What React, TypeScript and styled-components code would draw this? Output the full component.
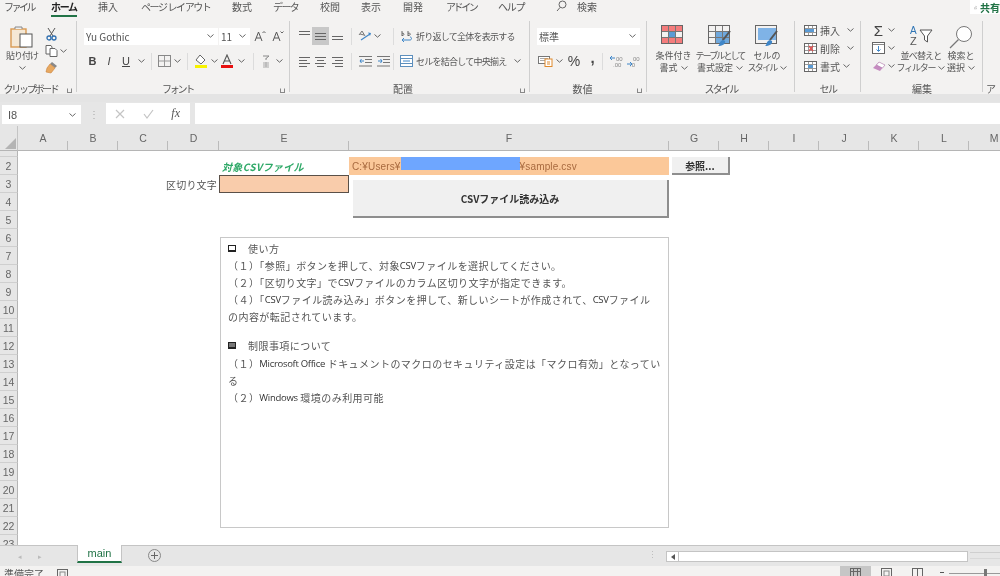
import React from 'react';
import styled, { createGlobalStyle } from 'styled-components';

const JP = '"Noto Sans CJK JP", "Liberation Sans", sans-serif';

const GlobalStyle = createGlobalStyle`
  html, body {
    margin: 0;
    padding: 0;
    background: #fff;
    font-family: ${JP};
    color: #444;
  }
`;

const Page = styled.div`
  width: 1000px;
  height: 576px;
  display: flex;
  flex-direction: column;
  overflow: hidden;
  background: #f3f2f1;
  filter: blur(0.4px);
`;

/* menu tabs */
const MenuBar = styled.div`
  height: 17px;
  display: flex;
  align-items: flex-start;
  position: relative;
  padding-left: 4px;
  font-size: 10px;
  line-height: 13px;
`;

const MenuItem = styled.div<{ $w: number; $ls?: number; $active?: boolean; $ml?: number }>`
  width: ${(p) => p.$w}px;
  flex: none;
  margin-left: ${(p) => p.$ml ?? 0}px;
  white-space: nowrap;
  font-weight: ${(p) => (p.$active ? 700 : 400)};
  color: ${(p) => (p.$active ? '#222' : '#555')};
  letter-spacing: ${(p) => p.$ls ?? 0}px;
  span {
    display: inline-block;
    height: 15px;
    border-bottom: ${(p) => (p.$active ? '2px solid #217346' : 'none')};
  }
`;

const ShareTab = styled.div`
  position: absolute;
  right: 0;
  top: 0;
  width: 30px;
  height: 14px;
  display: flex;
  align-items: center;
  gap: 3px;
  padding-left: 4px;
  box-sizing: border-box;
  overflow: hidden;
  background: #fff;
  color: #217346;
  font-weight: 700;
  white-space: nowrap;
`;

/* ribbon */
const Ribbon = styled.div`
  height: 77px;
  flex: none;
  display: flex;
  font-size: 10px;
  color: #555;
`;

const Group = styled.div<{ $w: number; $pad?: number; $noLine?: boolean }>`
  width: ${(p) => p.$w}px;
  flex: none;
  box-sizing: border-box;
  display: flex;
  flex-direction: column;
  position: relative;
  padding-left: ${(p) => p.$pad ?? 0}px;
  &::after {
    content: '';
    display: ${(p) => (p.$noLine ? 'none' : 'block')};
    position: absolute;
    right: 0;
    top: 4px;
    bottom: 2px;
    width: 1px;
    background: #cfcfcf;
  }
`;

const GroupBody = styled.div`
  height: 64px;
  flex: none;
  padding-top: 8px;
  box-sizing: border-box;
  display: flex;
  flex-direction: column;
`;

const HBody = styled(GroupBody)`
  flex-direction: row;
`;

const GroupLabel = styled.div<{ $pad?: number; $shift?: number; $start?: boolean; $ls?: number }>`
  flex: 1;
  display: flex;
  align-items: center;
  justify-content: ${(p) => (p.$start ? 'flex-start' : 'center')};
  font-size: 10px;
  letter-spacing: ${(p) => p.$ls ?? 0}px;
  color: #555;
  position: relative;
  margin-left: -${(p) => p.$pad ?? 0}px;
  padding-right: ${(p) => p.$shift ?? 0}px;
  padding-left: ${(p) => (p.$start ? 3 : 0)}px;
  white-space: nowrap;
`;

const Launcher = styled.span`
  position: absolute;
  right: 5px;
  bottom: 3px;
  width: 5px;
  height: 5px;
  border: 1px solid #888;
  border-top-color: transparent;
  border-right-color: #888;
  box-sizing: border-box;
`;

const ToolRow = styled.div<{ $top?: number }>`
  height: 18px;
  display: flex;
  align-items: center;
  margin-top: ${(p) => p.$top ?? 0}px;
  white-space: nowrap;
`;

const Tool = styled.div<{ $w: number; $on?: boolean; $bold?: boolean; $italic?: boolean; $under?: boolean; $size?: number; $lift?: number }>`
  width: ${(p) => p.$w}px;
  height: 18px;
  flex: none;
  box-sizing: border-box;
  padding-bottom: ${(p) => p.$lift ?? 0}px;
  display: flex;
  align-items: center;
  justify-content: center;
  background: ${(p) => (p.$on ? '#c8c8c8' : 'transparent')};
  font-family: "Liberation Sans", sans-serif;
  font-weight: ${(p) => (p.$bold ? 700 : 400)};
  font-style: ${(p) => (p.$italic ? 'italic' : 'normal')};
  text-decoration: ${(p) => (p.$under ? 'underline' : 'none')};
  font-size: ${(p) => p.$size ?? 11}px;
  color: #444;
`;

const Divider = styled.div<{ $l?: number; $r?: number }>`
  width: 1px;
  height: 17px;
  flex: none;
  background: #dcdcdc;
  margin: 0 ${(p) => p.$r ?? 4}px 0 ${(p) => p.$l ?? 4}px;
`;

const Spacer = styled.span<{ $w: number }>`
  width: ${(p) => p.$w}px;
  flex: none;
`;

const SelectBox = styled.div<{ $w: number }>`
  width: ${(p) => p.$w}px;
  height: 17px;
  flex: none;
  box-sizing: border-box;
  background: #fff;
  display: flex;
  align-items: center;
  justify-content: space-between;
  padding: 0 4px 0 2px;
  font-size: 10px;
  color: #555;
  margin-right: 1px;
`;

const ToolText = styled.span`
  font-size: 9px;
  color: #555;
  font-family: ${JP};
  margin-left: 3px;
  letter-spacing: -0.75px;
`;

const PasteButton = styled.div`
  width: 44px;
  flex: none;
  display: flex;
  flex-direction: column;
  align-items: center;
  line-height: 12px;
  font-size: 9px;
  letter-spacing: -1px;
  white-space: nowrap;
  svg:last-child {
    margin-top: 4px;
  }
`;

const SmallColumn = styled.div<{ $ml?: number; $w?: number }>`
  display: flex;
  flex-direction: column;
  flex: none;
  margin-left: ${(p) => p.$ml ?? -1}px;
  width: ${(p) => (p.$w ? `${p.$w}px` : 'auto')};
`;

const EditColumn = styled(SmallColumn)`
  margin-top: -4px;
`;

const BigButton = styled.div<{ $w: number }>`
  width: ${(p) => p.$w}px;
  flex: none;
  display: flex;
  flex-direction: column;
  align-items: center;
  font-size: 9px;
  line-height: 12px;
  color: #555;
  white-space: nowrap;
`;

const BigIcon = styled.div`
  height: 25px;
  display: flex;
  align-items: flex-start;
  justify-content: center;
`;

const BigLine = styled.span<{ $ls?: number }>`
  display: inline-flex;
  align-items: center;
  gap: 3px;
  letter-spacing: ${(p) => p.$ls ?? 0}px;
`;

const CellStack = styled(GroupBody)`
  padding-top: 4px;
`;

const CellRow = styled.div`
  height: 18px;
  display: flex;
  align-items: center;
  gap: 3px;
  padding-left: 9px;
  font-size: 10px;
  color: #555;
`;

/* formula bar */
const Band = styled.div`
  height: 8px;
  flex: none;
  background: #e4e4e4;
`;

const FormulaBar = styled.div`
  height: 24px;
  flex: none;
  display: flex;
  align-items: flex-start;
  background: #e6e6e6;
  padding-top: 1px;
  box-sizing: border-box;
`;

const NameBox = styled.div`
  width: 79px;
  height: 19px;
  margin: 2px 0 0 2px;
  flex: none;
  background: #fff;
  display: flex;
  align-items: center;
  justify-content: space-between;
  padding: 0 5px 0 6px;
  box-sizing: border-box;
  font-family: "Liberation Sans", sans-serif;
  font-size: 11px;
  color: #555;
`;

const Grip = styled.div`
  width: 25px;
  height: 20px;
  flex: none;
  display: flex;
  align-items: center;
  justify-content: center;
  color: #aaa;
  font-size: 10px;
`;

const FormulaButtons = styled.div`
  width: 84px;
  height: 21px;
  flex: none;
  background: #fff;
  display: flex;
  align-items: center;
  justify-content: space-between;
  padding: 0 10px 0 9px;
  box-sizing: border-box;
  color: #bbb;
`;

const FxLabel = styled.span`
  font-family: "Liberation Serif", serif;
  font-style: italic;
  font-size: 12px;
  color: #555;
`;

const FormulaInput = styled.div`
  flex: 1;
  height: 21px;
  margin-left: 5px;
  background: #fff;
`;

/* worksheet */
const Sheet = styled.div`
  height: 419px;
  flex: none;
  position: relative;
  overflow: hidden;
  background: #fff;
  display: grid;
  grid-template-columns: 18px 50px 50px 50px 51px 130px 320px 50px 50px 50px 50px 50px 50px 50px;
  grid-template-rows: 25px 6px repeat(23, 18px);
`;

const Corner = styled.div`
  background: #e6e6e6;
  border-bottom: 1px solid #b5b5b5;
  border-right: 1px solid #c4c4c4;
  position: relative;
  &::after {
    content: '';
    position: absolute;
    right: 1px;
    bottom: 1px;
    border-style: solid;
    border-width: 0 0 11px 11px;
    border-color: transparent transparent #b4b4b4 transparent;
  }
`;

const ColHead = styled.div<{ $col: number }>`
  grid-column: ${(p) => p.$col};
  grid-row: 1;
  background: #e6e6e6;
  border-bottom: 1px solid #b5b5b5;
  position: relative;
  display: flex;
  align-items: center;
  justify-content: center;
  font-family: "Liberation Sans", sans-serif;
  font-size: 10.5px;
  color: #666;
  &::after {
    content: '';
    position: absolute;
    right: 0;
    bottom: 0;
    width: 1px;
    height: 9px;
    background: #bbb;
  }
`;

const RowHead = styled.div<{ $row: number }>`
  grid-column: 1;
  grid-row: ${(p) => p.$row};
  background: #e6e6e6;
  border-right: 1px solid #b5b5b5;
  border-bottom: 1px solid #cfcfcf;
  box-sizing: border-box;
  display: flex;
  align-items: center;
  justify-content: center;
  overflow: hidden;
  font-family: "Liberation Sans", sans-serif;
  font-size: 10.5px;
  color: #666;
`;

const Cell = styled.div<{ $col: number; $row: number }>`
  grid-column: ${(p) => p.$col};
  grid-row: ${(p) => p.$row};
  display: flex;
  align-items: center;
  white-space: nowrap;
  font-size: 10px;
  min-width: 0;
`;

const GreenLabel = styled(Cell)`
  padding-left: 3px;
  color: #2fa968;
  font-weight: 700;
  font-style: italic;
  letter-spacing: 0.35px;
`;

const PathCell = styled(Cell)`
  background: #fbc899;
  color: #a86a3f;
  padding-left: 3px;
  font-family: "Liberation Sans", sans-serif;
  font-size: 10px;
  letter-spacing: 0.15px;
`;

const Redaction = styled.span`
  display: inline-block;
  width: 119px;
  height: 13px;
  margin: -5px 0 0 0;
  background: #6ea6ff;
  flex: none;
`;

const SepLabel = styled(Cell)`
  justify-content: flex-end;
  padding-right: 2px;
  color: #555;
  letter-spacing: 0.2px;
`;

const InputCell = styled(Cell)`
  background: #f9ccab;
  border: 1px solid #5a5048;
  box-sizing: border-box;
`;

const MacroButton = styled.div<{ $left: number; $top: number; $w: number; $h: number; $size: number }>`
  position: absolute;
  left: ${(p) => p.$left}px;
  top: ${(p) => p.$top}px;
  width: ${(p) => p.$w}px;
  height: ${(p) => p.$h}px;
  box-sizing: border-box;
  background: #f0f0f0;
  border-right: 2px solid #8e8e8e;
  border-bottom: 2px solid #8e8e8e;
  display: flex;
  align-items: center;
  justify-content: center;
  font-size: ${(p) => p.$size}px;
  font-weight: 700;
  color: #333;
`;

const NoteBox = styled.div`
  position: absolute;
  left: 220px;
  top: 111px;
  width: 449px;
  height: 291px;
  box-sizing: border-box;
  background: #fff;
  border: 1px solid #c8c8c8;
  padding: 2px 0 0 7px;
  font-size: 10px;
  color: #555;
`;

const NoteLine = styled.div<{ $gap?: number }>`
  height: 17px;
  line-height: 17px;
  margin-top: ${(p) => p.$gap ?? 0}px;
  white-space: nowrap;
  display: flex;
  align-items: center;
  letter-spacing: 0.45px;
`;

const Latin = styled.span`
  font-family: "Open Sans", "Liberation Sans", sans-serif;
  letter-spacing: -0.3px;
  font-size: 9.5px;
  color: #333;
`;

const Bullet = styled.span<{ $dark?: boolean }>`
  width: 8px;
  height: 7px;
  flex: none;
  margin-right: 12px;
  box-sizing: border-box;
  border: 1.5px solid #222;
  border-bottom-width: 2px;
  background: ${(p) => (p.$dark ? '#777' : '#fff')};
`;

/* sheet tabs */
const SheetTabs = styled.div`
  height: 21px;
  flex: none;
  display: flex;
  align-items: flex-start;
  box-sizing: border-box;
  background: #e6e6e6;
  border-top: 1px solid #c4c4c4;
  color: #bbb;
  font-size: 7px;
`;

const TabArrows = styled.div`
  width: 77px;
  flex: none;
  height: 19px;
  display: flex;
  align-items: center;
  gap: 16px;
  padding-left: 18px;
  box-sizing: border-box;
`;

const ActiveTab = styled.div`
  width: 45px;
  height: 18px;
  flex: none;
  margin-top: -1px;
  background: #fff;
  border-left: 1px solid #c4c4c4;
  border-right: 1px solid #c4c4c4;
  border-bottom: 2px solid #217346;
  box-sizing: border-box;
  display: flex;
  align-items: center;
  justify-content: center;
  font-family: "Liberation Sans", sans-serif;
  font-size: 11px;
  color: #217346;
`;

const AddTab = styled.div`
  width: 13px;
  height: 13px;
  flex: none;
  margin: 3px 0 0 26px;
  box-sizing: border-box;
  border: 1px solid #888;
  border-radius: 50%;
  display: flex;
  align-items: center;
  justify-content: center;
  color: #666;
`;

const ScrollGrip = styled.div`
  margin: 4px 0 0 487px;
  width: 18px;
  flex: none;
  color: #bbb;
  font-size: 9px;
  line-height: 10px;
`;

const ScrollBar = styled.div`
  width: 302px;
  height: 11px;
  margin-top: 5px;
  flex: none;
  display: flex;
  box-sizing: border-box;
  border: 1px solid #c4c4c4;
  background: #fff;
`;

const ScrollButton = styled.div`
  width: 11px;
  flex: none;
  border-right: 1px solid #c4c4c4;
  display: flex;
  align-items: center;
  justify-content: center;
  &::before {
    content: '';
    border-style: solid;
    border-width: 3px 4px 3px 0;
    border-color: transparent #555 transparent transparent;
  }
`;

const ScrollRest = styled.div`
  flex: 1;
  margin: 6px 0 0 2px;
  height: 5px;
  border-top: 1px solid #cfcfcf;
  border-bottom: 1px solid #d8d8d8;
`;

/* status bar */
const StatusBar = styled.div`
  height: 10px;
  flex: none;
  display: flex;
  align-items: flex-start;
  overflow: hidden;
  background: #f3f2f1;
  font-size: 10px;
  line-height: 13px;
  color: #555;
`;

const StatusText = styled.div`
  width: 57px;
  flex: none;
  padding: 1px 0 0 4px;
  box-sizing: border-box;
`;

const ViewButton = styled.div<{ $on?: boolean }>`
  width: 31px;
  height: 10px;
  flex: none;
  display: flex;
  align-items: flex-start;
  justify-content: center;
  padding-top: 2px;
  box-sizing: border-box;
  background: ${(p) => (p.$on ? '#c6c6c6' : 'transparent')};
`;

const StatusGap = styled.div`
  width: 783px;
  flex: none;
  padding-top: 2px;
  box-sizing: border-box;
`;

const ZoomSlider = styled.div`
  flex: 1;
  position: relative;
  margin: 7px 0 0 16px;
  height: 1px;
  background: #999;
  &::before {
    content: '';
    position: absolute;
    left: -9px;
    top: -1px;
    width: 4px;
    height: 1px;
    background: #555;
  }
  &::after {
    content: '';
    position: absolute;
    left: 35px;
    top: -4px;
    width: 3px;
    height: 8px;
    background: #777;
  }
`;

/* drawings */
const Chev = () => (
  <svg width="7" height="4" viewBox="0 0 7 4">
    <path d="M0.5 0.5 3.5 3.2 6.5 0.5" fill="none" stroke="#666" strokeWidth="1" />
  </svg>
);

const Lines = ({ rows }: { rows: number[][] }) => (
  <svg width="13" height="12" viewBox="0 0 13 12">
    {rows.map(([x, y, w], i) => (
      <rect key={i} x={x} y={y} width={w} height="1" fill="#666" />
    ))}
  </svg>
);

const PasteIcon = () => (
  <svg width="24" height="25" viewBox="0 0 24 25">
    <rect x="1" y="4" width="15" height="18" fill="#f5e8d5" stroke="#d99a52" strokeWidth="1.4" />
    <path d="M5 4 V2 H12 V4" fill="#eee" stroke="#888" />
    <rect x="10" y="9" width="12" height="13" fill="#fff" stroke="#555" />
  </svg>
);

const ScissorsIcon = () => (
  <svg width="11" height="13" viewBox="0 0 11 13">
    <path d="M2 0 7 8M9 0 4 8" stroke="#555" fill="none" />
    <circle cx="3" cy="10" r="2" fill="none" stroke="#2f6fb0" strokeWidth="1.3" />
    <circle cx="8" cy="10" r="2" fill="none" stroke="#2f6fb0" strokeWidth="1.3" />
  </svg>
);

const CopyIcon = () => (
  <svg width="14" height="12" viewBox="0 0 14 12">
    <path d="M1 .5H6L7 2V9H1Z" fill="#fff" stroke="#666" />
    <path d="M5 3.5H10L12 5.5V11.5H5Z" fill="#fff" stroke="#666" />
  </svg>
);

const BrushIcon = () => (
  <svg width="13" height="13" viewBox="0 0 13 13">
    <path d="M7 1 12 5 10 7 5 3Z" fill="#888" />
    <path d="M5 3 10 7 6 12 1 11 2 7Z" fill="#e7a860" stroke="#c9813a" strokeWidth=".6" />
  </svg>
);

const BordersIcon = () => (
  <svg width="13" height="12" viewBox="0 0 13 12">
    <rect x=".5" y=".5" width="12" height="11" fill="none" stroke="#888" />
    <path d="M6.5 1V11M1 6H12" stroke="#999" />
  </svg>
);

const FillIcon = () => (
  <svg width="14" height="14" viewBox="0 0 14 14">
    <path d="M6 1 11 6 7 10 2 6Z" fill="#fff" stroke="#666" />
    <rect x="1" y="11" width="12" height="3" fill="#f7f300" />
  </svg>
);

const FontColorIcon = () => (
  <svg width="14" height="14" viewBox="0 0 14 14">
    <path d="M3 10 7 1 11 10M4.5 7H9.5" fill="none" stroke="#555" strokeWidth="1.1" />
    <rect x="1" y="11" width="12" height="3" fill="#e81010" />
  </svg>
);

const FontSizeIcon = ({ up }: { up?: boolean }) => (
  <svg width="12" height="12" viewBox="0 0 12 12">
    <path d="M1 11 4.5 2 8 11M2.3 8H6.7" fill="none" stroke="#555" />
    <path d={up ? 'M8.5 3 10 1.5 11.5 3' : 'M8.5 1.5 10 3 11.5 1.5'} fill="none" stroke="#666" />
  </svg>
);

const PhoneticIcon = () => (
  <svg width="10" height="13" viewBox="0 0 10 13">
    <path d="M2 1H8L5 3.5M5 3 5 5" fill="none" stroke="#888" />
    <path d="M2 8H8M2 10H8M2 12H8M5 7V12" stroke="#aaa" />
  </svg>
);

const OrientIcon = () => (
  <svg width="14" height="12" viewBox="0 0 14 12">
    <path d="M1 5 4 1 7 6M2 4 6 5" fill="none" stroke="#777" />
    <path d="M3 10 12 4" stroke="#3f86c8" strokeWidth="1.2" />
    <path d="M10 2.5 13 3 12 6Z" fill="#3f86c8" />
  </svg>
);

const WrapIcon = () => (
  <svg width="12" height="13" viewBox="0 0 12 13">
    <path d="M1 6V1M1 3.5C3 2 4 6 1 5.5M7 1V6M7 3.5C10 2 10 6 7 5.5" fill="none" stroke="#666" />
    <path d="M1 10H9C11 10 11 7 9 7" fill="none" stroke="#3f86c8" />
    <path d="M3 8 1 10 3 12" fill="none" stroke="#3f86c8" />
  </svg>
);

const MergeIcon = () => (
  <svg width="13" height="12" viewBox="0 0 13 12">
    <rect x=".5" y=".5" width="12" height="11" fill="#fff" stroke="#5d8fbd" />
    <path d="M1 3.5H12M1 8.5H12" stroke="#5d8fbd" />
    <path d="M3 6H10" stroke="#3f86c8" />
  </svg>
);

const IndentIcon = ({ flip }: { flip?: boolean }) => (
  <svg width="13" height="11" viewBox="0 0 13 11">
    <path d="M0 .5H13M6 3.5H13M6 6.5H13M0 10H13" stroke="#777" />
    <path d={flip ? 'M1 5H5M3.5 3 5 5 3.5 7' : 'M5 5H1M2.5 3 1 5 2.5 7'} fill="none" stroke="#3f86c8" />
  </svg>
);

const AccountingIcon = () => (
  <svg width="15" height="12" viewBox="0 0 15 12">
    <rect x=".5" y="1.5" width="11" height="7" fill="#fff" stroke="#777" />
    <path d="M2 3.5H10M2 5.5H10" stroke="#aaa" />
    <rect x="7" y="4" width="7" height="7.5" fill="#fff" stroke="#e08a2c" />
    <path d="M9 7H12M9 9H12" stroke="#e08a2c" />
  </svg>
);

const DecimalIcon = ({ more }: { more?: boolean }) => (
  <svg width="14" height="13" viewBox="0 0 14 13">
    <path d={more ? 'M6 3H1M3 1 1 3 3 5' : 'M1 9H6M4 7 6 9 4 11'} fill="none" stroke="#3f86c8" />
    <text x="7" y="5.5" fontSize="6" fontFamily="Liberation Sans" fill="#888">00</text>
    <text x="4" y="12" fontSize="6" fontFamily="Liberation Sans" fill="#888">{more ? '.00' : '.0'}</text>
  </svg>
);

const GridIcon = ({ kind }: { kind: 'cond' | 'table' | 'cell' }) => (
  <svg width="25" height="22" viewBox="0 0 25 22">
    {kind === 'cond' && (
      <>
        <rect x="1" y="1" width="20" height="5" fill="#f47c7c" />
        <rect x="7" y="6" width="7" height="6" fill="#5b9bd5" />
        <rect x="1" y="12" width="20" height="6" fill="#f47c7c" />
      </>
    )}
    {kind === 'table' && <rect x="8" y="7" width="13" height="11" fill="#6fa8dc" />}
    {kind === 'cell' && <rect x="3" y="3" width="18" height="12" fill="#7fb3e6" />}
    <rect x=".5" y=".5" width="21" height="18" fill="none" stroke="#666" />
    {kind !== 'cell' && <path d="M7.5 1V18M14.5 1V18M1 6.5H21M1 12.5H21" stroke="#777" />}
    {kind !== 'cond' && (
      <>
        <path d="M22 6 15 15" stroke="#555" strokeWidth="2" />
        <path d="M15 15 C11 16 12 20 10 21 C14 21 18 19 17 16Z" fill="#3f86c8" />
      </>
    )}
  </svg>
);

const CellOpIcon = ({ kind }: { kind: 'ins' | 'del' | 'fmt' }) => (
  <svg width="13" height="11" viewBox="0 0 13 11">
    <rect x=".5" y=".5" width="12" height="10" fill="#fff" stroke="#666" />
    <path d="M1 3.5H12M1 7.5H12M4.5 1V10M8.5 1V10" stroke="#999" />
    {kind === 'ins' && <rect x="1" y="4" width="9" height="3" fill="#5b9bd5" />}
    {kind === 'del' && <path d="M5 3 9 8M9 3 5 8" stroke="#e05050" strokeWidth="1.3" />}
    {kind === 'fmt' && <rect x="4" y="4" width="5" height="3" fill="#5b9bd5" />}
  </svg>
);

const FillDownIcon = () => (
  <svg width="13" height="12" viewBox="0 0 13 12">
    <rect x=".5" y=".5" width="12" height="11" fill="#fff" stroke="#666" />
    <path d="M1 2.5H12" stroke="#888" />
    <path d="M6.5 4V9M4.5 7.5 6.5 9.5 8.5 7.5" fill="none" stroke="#3f86c8" />
  </svg>
);

const EraserIcon = () => (
  <svg width="14" height="13" viewBox="0 0 14 13">
    <path d="M1 8 7 2 13 5 8 11Z" fill="#c58bc0" />
    <path d="M7 2 13 5 10.5 8 4.5 5Z" fill="#fff" stroke="#a76ea3" strokeWidth=".5" />
  </svg>
);

const SortIcon = () => (
  <svg width="24" height="21" viewBox="0 0 24 21">
    <text x="1" y="9" fontSize="10" fontFamily="Liberation Sans" fill="#2f75b5">A</text>
    <text x="1" y="20" fontSize="11" fontFamily="Liberation Sans" fill="#555">Z</text>
    <path d="M11 5H23L18.5 11V17L15.5 15V11Z" fill="#fff" stroke="#555" />
  </svg>
);

const BigSearch = () => (
  <svg width="25" height="24" viewBox="0 0 25 24">
    <circle cx="15" cy="9" r="7.5" fill="#fff" stroke="#777" />
    <path d="M9.5 14.5 1 23" stroke="#777" strokeWidth="1.2" />
  </svg>
);

const SmallSearch = () => (
  <svg width="11" height="12" viewBox="0 0 11 12">
    <circle cx="6.5" cy="4.5" r="3.5" fill="none" stroke="#666" />
    <path d="M4 7.5 1 11" stroke="#666" />
  </svg>
);

const ShareIcon = () => (
  <svg width="9" height="9" viewBox="0 0 9 9">
    <path d="M.5 3.5V8.5H7.5V5M3 5C3 3 4.5 2 6.5 2M5.5 .5 7.5 2 5.5 3.5" fill="none" stroke="#777" />
  </svg>
);

const MarkX = () => (
  <svg width="10" height="10" viewBox="0 0 10 10">
    <path d="M1 1 9 9M9 1 1 9" stroke="#c4c4c4" strokeWidth="1.2" />
  </svg>
);

const MarkCheck = () => (
  <svg width="11" height="10" viewBox="0 0 11 10">
    <path d="M1 5 4 9 10 1" fill="none" stroke="#c4c4c4" strokeWidth="1.2" />
  </svg>
);

const ViewIcon = ({ kind }: { kind: 'normal' | 'page' | 'break' }) => (
  <svg width="11" height="10" viewBox="0 0 11 10">
    <rect x=".5" y=".5" width="10" height="9" fill="none" stroke="#666" />
    {kind === 'normal' && <path d="M3.5 1V10M7.5 1V10M1 3.5H10" stroke="#666" />}
    {kind === 'page' && <rect x="3" y="3" width="5" height="5" fill="none" stroke="#888" />}
    {kind === 'break' && <path d="M5.5 1V10" stroke="#666" />}
  </svg>
);

const menu: { label: string; w: number; ls?: number; active?: boolean }[] = [
  { label: 'ファイル', w: 47, ls: -2.5 },
  { label: 'ホーム', w: 47, ls: -1.3, active: true },
  { label: '挿入', w: 43 },
  { label: 'ページ レイアウト', w: 91, ls: -1.4 },
  { label: '数式', w: 41 },
  { label: 'データ', w: 47, ls: -1.6 },
  { label: '校閲', w: 41 },
  { label: '表示', w: 42 },
  { label: '開発', w: 43 },
  { label: 'アドイン', w: 52, ls: -2.4 },
  { label: 'ヘルプ', w: 58, ls: -1.3 },
];

const columns = [
  ['A', 2], ['B', 3], ['C', 4], ['D', 5], ['E', 6], ['F', 7], ['G', 8],
  ['H', 9], ['I', 10], ['J', 11], ['K', 12], ['L', 13], ['M', 14],
] as const;

const rows = Array.from({ length: 23 }, (_, i) => i + 1);

const App = () => {
  return (
    <Page>
      <GlobalStyle />
      <MenuBar>
        {menu.map((m) => (
          <MenuItem key={m.label} $w={m.w} $ls={m.ls} $active={m.active}><span>{m.label}</span></MenuItem>
        ))}
        <SmallSearch />
        <MenuItem $w={30} $ml={10}><span>検索</span></MenuItem>
        <ShareTab><ShareIcon />共有</ShareTab>
      </MenuBar>

      <Ribbon>
        <Group $w={77}>
          <HBody>
            <PasteButton>
              <PasteIcon />
              <span>貼り付け</span>
              <Chev />
            </PasteButton>
            <SmallColumn>
              <ToolRow><Tool $w={17}><ScissorsIcon /></Tool></ToolRow>
              <ToolRow $top={-1}><Tool $w={17}><CopyIcon /></Tool><Chev /></ToolRow>
              <ToolRow $top={-2}><Tool $w={17}><BrushIcon /></Tool></ToolRow>
            </SmallColumn>
          </HBody>
          <GroupLabel $shift={16} $ls={-2.3}>クリップボード<Launcher /></GroupLabel>
        </Group>

        <Group $w={213} $pad={7}>
          <GroupBody>
            <ToolRow $top={2}>
              <SelectBox $w={134}>Yu Gothic<Chev /></SelectBox>
              <SelectBox $w={31}>11<Chev /></SelectBox>
              <Tool $w={18}><FontSizeIcon up /></Tool>
              <Tool $w={17}><FontSizeIcon /></Tool>
            </ToolRow>
            <ToolRow $top={7}>
              <Tool $w={17} $bold>B</Tool>
              <Tool $w={16} $italic>I</Tool>
              <Tool $w={18} $under>U</Tool>
              <Tool $w={12}><Chev /></Tool>
              <Divider />
              <Tool $w={16}><BordersIcon /></Tool>
              <Tool $w={11}><Chev /></Tool>
              <Divider />
              <Tool $w={18}><FillIcon /></Tool>
              <Tool $w={8}><Chev /></Tool>
              <Tool $w={18}><FontColorIcon /></Tool>
              <Tool $w={10}><Chev /></Tool>
              <Divider $l={7} />
              <Tool $w={16}><PhoneticIcon /></Tool>
              <Tool $w={11}><Chev /></Tool>
            </ToolRow>
          </GroupBody>
          <GroupLabel $pad={7} $shift={12} $ls={-2.2}>フォント<Launcher /></GroupLabel>
        </Group>

        <Group $w={240} $pad={6}>
          <GroupBody>
            <ToolRow $top={2}>
              <Tool $w={16}><Lines rows={[[1, 1, 11], [1, 4, 11]]} /></Tool>
              <Tool $w={17} $on><Lines rows={[[1, 3, 11], [1, 6, 11], [1, 9, 11]]} /></Tool>
              <Tool $w={17}><Lines rows={[[1, 6, 11], [1, 9, 11]]} /></Tool>
              <Divider $l={5} $r={5} />
              <Tool $w={16}><OrientIcon /></Tool>
              <Tool $w={8}><Chev /></Tool>
              <Divider $l={12} $r={7} />
              <WrapIcon />
              <ToolText>折り返して全体を表示する</ToolText>
            </ToolRow>
            <ToolRow $top={7}>
              <Tool $w={16}><Lines rows={[[1, 2, 11], [1, 5, 8], [1, 8, 11], [1, 11, 8]]} /></Tool>
              <Tool $w={17}><Lines rows={[[1, 2, 11], [3, 5, 7], [1, 8, 11], [3, 11, 7]]} /></Tool>
              <Tool $w={17}><Lines rows={[[1, 2, 11], [4, 5, 8], [1, 8, 11], [4, 11, 8]]} /></Tool>
              <Divider $l={5} $r={5} />
              <Tool $w={17}><IndentIcon /></Tool>
              <Tool $w={18}><IndentIcon flip /></Tool>
              <Divider $l={1} $r={6} />
              <MergeIcon />
              <ToolText>セルを結合して中央揃え</ToolText>
              <Spacer $w={8} />
              <Chev />
            </ToolRow>
          </GroupBody>
          <GroupLabel $pad={6} $shift={14}>配置<Launcher /></GroupLabel>
        </Group>

        <Group $w={117} $pad={7}>
          <GroupBody>
            <ToolRow $top={2}>
              <SelectBox $w={103}>標準<Chev /></SelectBox>
            </ToolRow>
            <ToolRow $top={7}>
              <Tool $w={17}><AccountingIcon /></Tool>
              <Tool $w={10}><Chev /></Tool>
              <Tool $w={20} $size={14}>%</Tool>
              <Tool $w={17} $bold $size={15} $lift={8}>,</Tool>
              <Divider $l={1} $r={4} />
              <Tool $w={17}><DecimalIcon more /></Tool>
              <Tool $w={17}><DecimalIcon /></Tool>
            </ToolRow>
          </GroupBody>
          <GroupLabel $pad={7} $shift={12}>数値<Launcher /></GroupLabel>
        </Group>

        <Group $w={148} $pad={4}>
          <HBody>
            <BigButton $w={45}>
              <BigIcon><GridIcon kind="cond" /></BigIcon>
              <BigLine>条件付き</BigLine>
              <BigLine>書式<Chev /></BigLine>
            </BigButton>
            <BigButton $w={48}>
              <BigIcon><GridIcon kind="table" /></BigIcon>
              <BigLine $ls={-1.9}>テーブルとして</BigLine>
              <BigLine>書式設定<Chev /></BigLine>
            </BigButton>
            <BigButton $w={46}>
              <BigIcon><GridIcon kind="cell" /></BigIcon>
              <BigLine>セルの</BigLine>
              <BigLine $ls={-1.7}>スタイル<Chev /></BigLine>
            </BigButton>
          </HBody>
          <GroupLabel $pad={4} $ls={-1.8}>スタイル</GroupLabel>
        </Group>

        <Group $w={66}>
          <CellStack>
            <CellRow><CellOpIcon kind="ins" />挿入<Spacer $w={1} /><Chev /></CellRow>
            <CellRow><CellOpIcon kind="del" />削除<Spacer $w={1} /><Chev /></CellRow>
            <CellRow><CellOpIcon kind="fmt" />書式<Chev /></CellRow>
          </CellStack>
          <GroupLabel $ls={-1.5}>セル</GroupLabel>
        </Group>

        <Group $w={122}>
          <HBody>
            <EditColumn $ml={8} $w={30}>
              <ToolRow><Tool $w={19} $size={15}>Σ</Tool><Chev /></ToolRow>
              <ToolRow><Tool $w={19}><FillDownIcon /></Tool><Chev /></ToolRow>
              <ToolRow><Tool $w={19}><EraserIcon /></Tool><Chev /></ToolRow>
            </EditColumn>
            <BigButton $w={44}>
              <BigIcon><SortIcon /></BigIcon>
              <BigLine $ls={-0.8}>並べ替えと</BigLine>
              <BigLine $ls={-1.2}>フィルター<Chev /></BigLine>
            </BigButton>
            <BigButton $w={36}>
              <BigIcon><BigSearch /></BigIcon>
              <BigLine>検索と</BigLine>
              <BigLine>選択<Chev /></BigLine>
            </BigButton>
          </HBody>
          <GroupLabel>編集</GroupLabel>
        </Group>

        <Group $w={17} $noLine>
          <GroupBody />
          <GroupLabel $start>ア</GroupLabel>
        </Group>
      </Ribbon>

      <Band />

      <FormulaBar>
        <NameBox>I8<Chev /></NameBox>
        <Grip>⋮</Grip>
        <FormulaButtons>
          <MarkX />
          <MarkCheck />
          <FxLabel>fx</FxLabel>
        </FormulaButtons>
        <FormulaInput />
      </FormulaBar>

      <Sheet>
        <Corner />
        {columns.map(([label, col]) => (
          <ColHead key={label} $col={col}>{label}</ColHead>
        ))}
        {rows.map((r) => (
          <RowHead key={r} $row={r + 1}>{r === 1 ? '' : r}</RowHead>
        ))}

        <GreenLabel $col={6} $row={3}>対象CSVファイル</GreenLabel>
        <PathCell $col={7} $row={3}>
          C:¥Users¥<Redaction />¥sample.csv
        </PathCell>
        <SepLabel $col={5} $row={4}>区切り文字</SepLabel>
        <InputCell $col={6} $row={4} />

        <MacroButton $left={672} $top={31} $w={58} $h={18} $size={10}>参照...</MacroButton>
        <MacroButton $left={353} $top={54} $w={316} $h={38} $size={10}>CSVファイル読み込み</MacroButton>

        <NoteBox>
          <NoteLine><Bullet />使い方</NoteLine>
          <NoteLine>（１）「参照」ボタンを押して、対象<Latin>CSV</Latin>ファイルを選択してください。</NoteLine>
          <NoteLine>（２）「区切り文字」で<Latin>CSV</Latin>ファイルのカラム区切り文字が指定できます。</NoteLine>
          <NoteLine>（４）「<Latin>CSV</Latin>ファイル読み込み」ボタンを押して、新しいシートが作成されて、<Latin>CSV</Latin>ファイル</NoteLine>
          <NoteLine>の内容が転記されています。</NoteLine>
          <NoteLine $gap={12}><Bullet $dark />制限事項について</NoteLine>
          <NoteLine $gap={1}>（１）<Latin>Microsoft Office</Latin>&nbsp;ドキュメントのマクロのセキュリティ設定は「マクロ有効」となってい</NoteLine>
          <NoteLine>る</NoteLine>
          <NoteLine>（２）<Latin>Windows</Latin>&nbsp;環境のみ利用可能</NoteLine>
        </NoteBox>
      </Sheet>

      <SheetTabs>
        <TabArrows><span>◂</span><span>▸</span></TabArrows>
        <ActiveTab>main</ActiveTab>
        <AddTab>
          <svg width="7" height="7" viewBox="0 0 7 7"><path d="M3.5 0V7M0 3.5H7" stroke="#666" /></svg>
        </AddTab>
        <ScrollGrip>⋮</ScrollGrip>
        <ScrollBar><ScrollButton /></ScrollBar>
        <ScrollRest />
      </SheetTabs>

      <StatusBar>
        <StatusText>準備完了</StatusText>
        <StatusGap><ViewIcon kind="page" /></StatusGap>
        <ViewButton $on><ViewIcon kind="normal" /></ViewButton>
        <ViewButton><ViewIcon kind="page" /></ViewButton>
        <ViewButton><ViewIcon kind="break" /></ViewButton>
        <ZoomSlider />
      </StatusBar>
    </Page>
  );
};

export default App;
